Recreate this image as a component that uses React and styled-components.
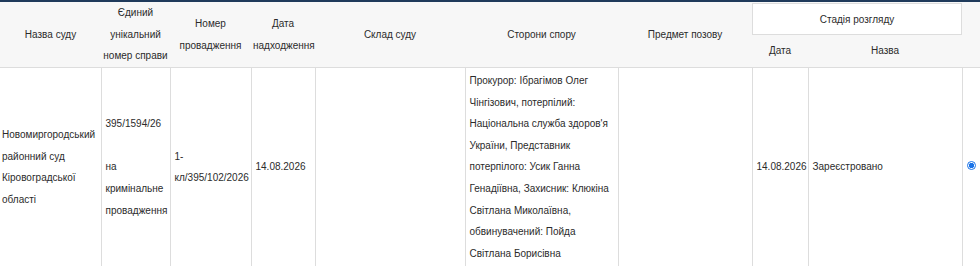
import React from "react"
import styled, { createGlobalStyle } from "styled-components"

const GlobalStyle = createGlobalStyle`
  body {
    margin: 0;
    background: #fff;
    font-family: "Liberation Sans", Arial, sans-serif;
    color: #333;
  }
`;

const Wrap = styled.div`
  width: 980px;
  height: 267px;
  overflow: hidden;
  border-top: 2px solid #1f3a5b;
`;

const Table = styled.table`
  border-collapse: collapse;
  table-layout: fixed;
  width: 1000px;
  font-size: 10px;
`;

const Head = styled.thead`
  background: #f7f7f7;
  border-bottom: 1px solid #ddd;
`;

const HeadRow = styled.tr`
  height: ${p => p.$h}px;
`;

const Th = styled.th`
  font-weight: normal;
  text-align: center;
  vertical-align: middle;
  line-height: 21.7px;
  padding: 0 2px;
  color: #2b2b2b;
`;

const StageTh = styled.th`
  font-weight: normal;
  padding: 1px 0 0;
  vertical-align: top;
  color: #2b2b2b;
`;

const StageBox = styled.div`
  box-sizing: border-box;
  height: 32px;
  border: 1px solid #ddd;
  background: #fff;
  display: flex;
  align-items: center;
  justify-content: center;
`;

const Td = styled.td`
  border-left: 1px solid #ddd;
  border-right: 1px solid #ddd;
  padding: 2px 3px 2px 4px;
  vertical-align: middle;
  line-height: 21.6px;
  color: #2b2b2b;
  &:first-child {
    border-left: none;
    padding-left: 2px;
  }
`;

const Radio = styled.span`
  display: inline-block;
  box-sizing: border-box;
  width: 9px;
  height: 9px;
  border-radius: 50%;
  border: 1.5px solid #1a73e8;
  background: radial-gradient(circle, #1a73e8 0 2.6px, #fff 2.9px);
  vertical-align: middle;
  margin-top: -4px;
`;

const widths = [101, 69, 81, 64, 150, 153, 134, 56, 154, 38];

const App = () => (
  <Wrap>
    <GlobalStyle />
    <Table>
      <colgroup>
        {widths.map((w, i) => <col key={i} style={{ width: w }} />)}
      </colgroup>
      <Head>
        <HeadRow $h={33}>
          <Th rowSpan={2}>Назва суду</Th>
          <Th rowSpan={2}>Єдиний унікальний номер справи</Th>
          <Th rowSpan={2}>Номер провадження</Th>
          <Th rowSpan={2}>Дата надходження</Th>
          <Th rowSpan={2}>Склад суду</Th>
          <Th rowSpan={2}>Сторони спору</Th>
          <Th rowSpan={2}>Предмет позову</Th>
          <StageTh colSpan={2}>
            <StageBox>Стадія розгляду</StageBox>
          </StageTh>
          <Th rowSpan={2}></Th>
        </HeadRow>
        <HeadRow $h={32}>
          <Th>Дата</Th>
          <Th>Назва</Th>
        </HeadRow>
      </Head>
      <tbody>
        <tr>
          <Td>Новомиргородський районний суд Кіровоградської області</Td>
          <Td>395/1594/26<br /><br />на кримінальне провадження</Td>
          <Td>1-кл/395/102/2026</Td>
          <Td>14.08.2026</Td>
          <Td></Td>
          <Td>
            Прокурор: Ібрагімов Олег Чінгізович, потерпілий: Національна служба
            здоров'я України, Представник потерпілого: Усик Ганна Генадіївна,
            Захисник: Клюкіна Світлана Миколаївна, обвинувачений: Пойда Світлана
            Борисівна
          </Td>
          <Td></Td>
          <Td>14.08.2026</Td>
          <Td>Зареєстровано</Td>
          <Td><Radio /></Td>
        </tr>
      </tbody>
    </Table>
  </Wrap>
)

export default App
